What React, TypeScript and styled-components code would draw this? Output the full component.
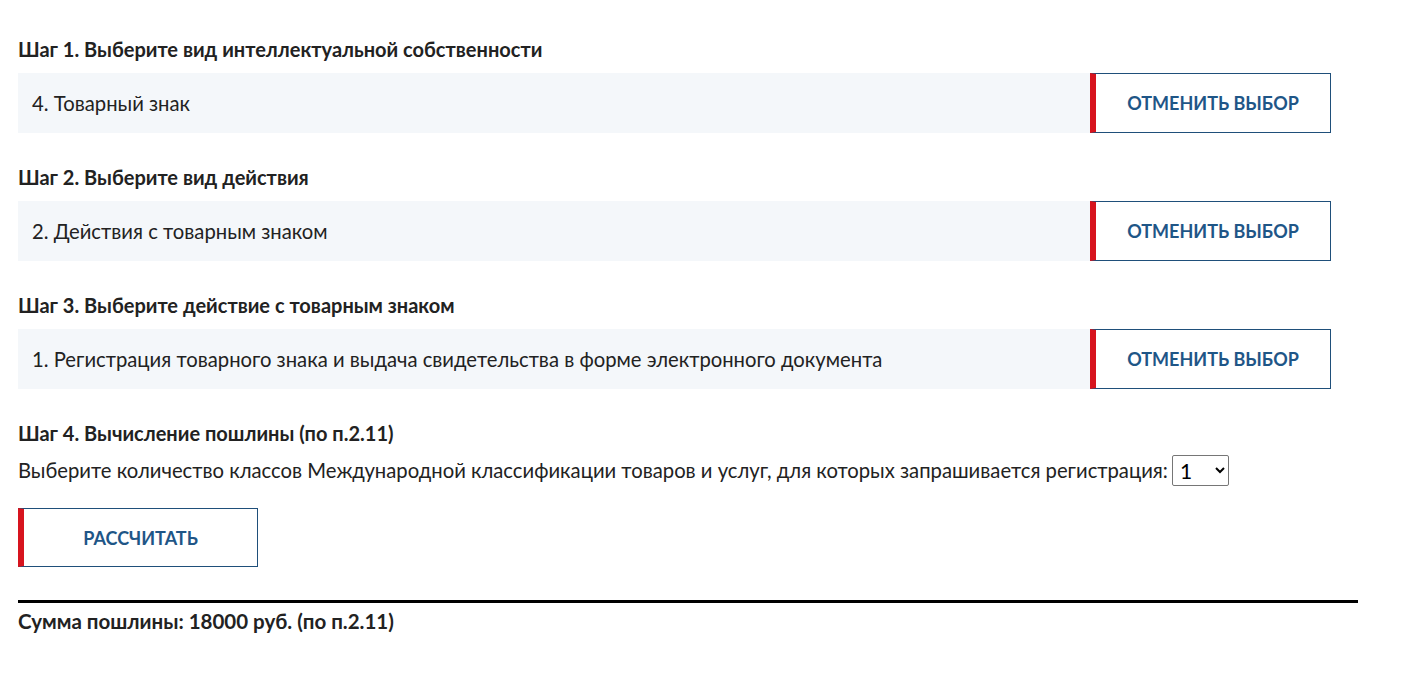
import React, { useState } from "react";
import styled, { createGlobalStyle } from "styled-components";

const Global = createGlobalStyle`
  html, body { margin: 0; padding: 0; background: #fff; }
  body { font-family: Lato, "Noto Sans", sans-serif; color: #222; }
`;

const Page = styled.div`
  padding: 38px 58px 40px 18px;
  display: flex;
  flex-direction: column;
`;

const Step = styled.section`
  display: flex;
  flex-direction: column;
  margin-bottom: 33px;
`;

const Heading = styled.h3<{ $tight?: boolean }>`
  margin: 0 0 ${(p) => (p.$tight ? 10 : 12)}px;
  font-size: 20px;
  font-weight: 700;
  line-height: 23px;
  color: #222;
`;

const Row = styled.div`
  display: flex;
  align-items: stretch;
  height: 60px;
  width: 1313px;
`;

const Value = styled.div`
  flex: 1;
  background: #f4f7fa;
  display: flex;
  align-items: center;
  padding-left: 14px;
  font-size: 20.25px;
  color: #222;
`;

const ActionButton = styled.button<{ $width?: number }>`
  width: ${(p) => p.$width ?? 241}px;
  flex: none;
  height: ${(p) => (p.$width ? 59 : 60)}px;
  box-sizing: border-box;
  background: #fff;
  border: 1px solid #1f4f7a;
  border-left: 6px solid #d7141e;
  color: #1f5687;
  font-family: Lato, "Noto Sans", sans-serif;
  font-size: 18px;
  font-weight: 700;
  text-transform: uppercase;
  cursor: pointer;
  padding: 0;
`;

const Text = styled.div`
  font-size: 20.25px;
  line-height: 31px;
  display: flex;
  align-items: center;
  margin: 0 0 22px;
`;

const Select = styled.select`
  margin-left: 4px;
  width: 57px;
  height: 31px;
  font-size: 21px;
  font-family: Lato, "Noto Sans", sans-serif;
  border: 1px solid #767676;
  border-radius: 2px;
  background: #fff;
  color: #000;
  padding: 0 0 0 3px;
`;

const Divider = styled.hr`
  margin: 33px 0 6px;
  border: none;
  border-top: 3px solid #000;
  width: 1340px;
`;

const Sum = styled.div`
  font-size: 20.5px;
  font-weight: 700;
  line-height: 24px;
`;

const steps = [
  { title: "Шаг 1. Выберите вид интеллектуальной собственности", value: "4. Товарный знак" },
  { title: "Шаг 2. Выберите вид действия", value: "2. Действия с товарным знаком" },
  {
    title: "Шаг 3. Выберите действие с товарным знаком",
    value: "1. Регистрация товарного знака и выдача свидетельства в форме электронного документа",
  },
];

export default function App() {
  const [n, setN] = useState("1");
  return (
    <>
      <Global />
      <Page>
        {steps.map((s) => (
          <Step key={s.title}>
            <Heading>{s.title}</Heading>
            <Row>
              <Value>{s.value}</Value>
              <ActionButton>Отменить выбор</ActionButton>
            </Row>
          </Step>
        ))}
        <Heading $tight>Шаг 4. Вычисление пошлины (по п.2.11)</Heading>
        <Text>
          Выберите количество классов Международной классификации товаров и услуг, для которых запрашивается регистрация:
          <Select value={n} onChange={(e) => setN(e.target.value)}>
            {Array.from({ length: 10 }, (_, i) => (
              <option key={i}>{i + 1}</option>
            ))}
          </Select>
        </Text>
        <ActionButton $width={240}>Рассчитать</ActionButton>
        <Divider />
        <Sum>Сумма пошлины: 18000 руб. (по п.2.11)</Sum>
      </Page>
    </>
  );
}
